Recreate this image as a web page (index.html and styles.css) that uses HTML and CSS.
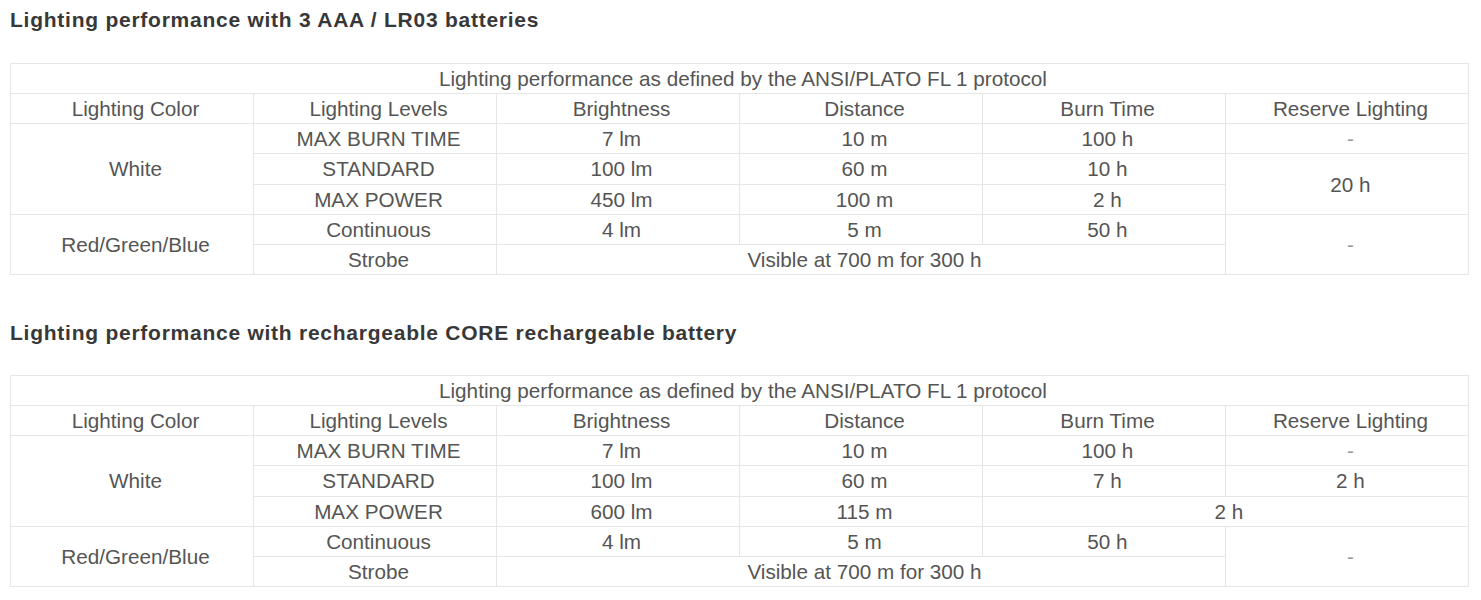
FILE: index.html
```html
<!DOCTYPE html>
<html lang="en">
<head>
<meta charset="utf-8">
<title>Lighting performance</title>
<link rel="stylesheet" href="styles.css">
</head>
<body>
<section class="block">
  <h2 class="title">Lighting performance with 3 AAA / LR03 batteries</h2>
  <table class="perf">
    <tr><td colspan="6">Lighting performance as defined by the ANSI/PLATO FL 1 protocol</td></tr>
    <tr><td>Lighting Color</td><td>Lighting Levels</td><td>Brightness</td><td>Distance</td><td>Burn Time</td><td>Reserve Lighting</td></tr>
    <tr><td rowspan="3">White</td><td>MAX BURN TIME</td><td>7 lm</td><td>10 m</td><td>100 h</td><td class="dash">-</td></tr>
    <tr><td>STANDARD</td><td>100 lm</td><td>60 m</td><td>10 h</td><td rowspan="2">20 h</td></tr>
    <tr><td>MAX POWER</td><td>450 lm</td><td>100 m</td><td>2 h</td></tr>
    <tr><td rowspan="2">Red/Green/Blue</td><td>Continuous</td><td>4 lm</td><td>5 m</td><td>50 h</td><td rowspan="2" class="dash">-</td></tr>
    <tr><td>Strobe</td><td colspan="3">Visible at 700 m for 300 h</td></tr>
  </table>
</section>
<section class="block second">
  <h2 class="title">Lighting performance with rechargeable CORE rechargeable battery</h2>
  <table class="perf">
    <tr><td colspan="6">Lighting performance as defined by the ANSI/PLATO FL 1 protocol</td></tr>
    <tr><td>Lighting Color</td><td>Lighting Levels</td><td>Brightness</td><td>Distance</td><td>Burn Time</td><td>Reserve Lighting</td></tr>
    <tr><td rowspan="3">White</td><td>MAX BURN TIME</td><td>7 lm</td><td>10 m</td><td>100 h</td><td class="dash">-</td></tr>
    <tr><td>STANDARD</td><td>100 lm</td><td>60 m</td><td>7 h</td><td>2 h</td></tr>
    <tr><td>MAX POWER</td><td>600 lm</td><td>115 m</td><td colspan="2">2 h</td></tr>
    <tr><td rowspan="2">Red/Green/Blue</td><td>Continuous</td><td>4 lm</td><td>5 m</td><td>50 h</td><td rowspan="2" class="dash">-</td></tr>
    <tr><td>Strobe</td><td colspan="3">Visible at 700 m for 300 h</td></tr>
  </table>
</section>
</body>
</html>
```
FILE: styles.css
```css
html, body {
  margin: 0;
  padding: 0;
  background: #ffffff;
}
body {
  padding: 0 10px;
  font-family: "Liberation Sans", Arial, Helvetica, sans-serif;
}
.block {
  display: block;
}
.title {
  margin: 0;
  padding-top: 8px;
  height: 63px;
  box-sizing: border-box;
  font-size: 21px;
  line-height: 24px;
  font-weight: bold;
  letter-spacing: 0.75px;
  color: #383838;
}
.second {
  margin-top: 39px;
}
.second .title {
  height: 61px;
  padding-top: 7px;
}
.perf {
  width: 1459px;
  table-layout: fixed;
  border-collapse: collapse;
  color: #555555;
  font-size: 20.7px;
}
.perf td {
  border: 1px solid #e6e6e6;
  padding: 0 0 0 7px;
  height: 29.15px;
  line-height: 29px;
  text-align: center;
  vertical-align: middle;
  white-space: nowrap;
}
.perf .dash {
  color: #999999;
}
```
